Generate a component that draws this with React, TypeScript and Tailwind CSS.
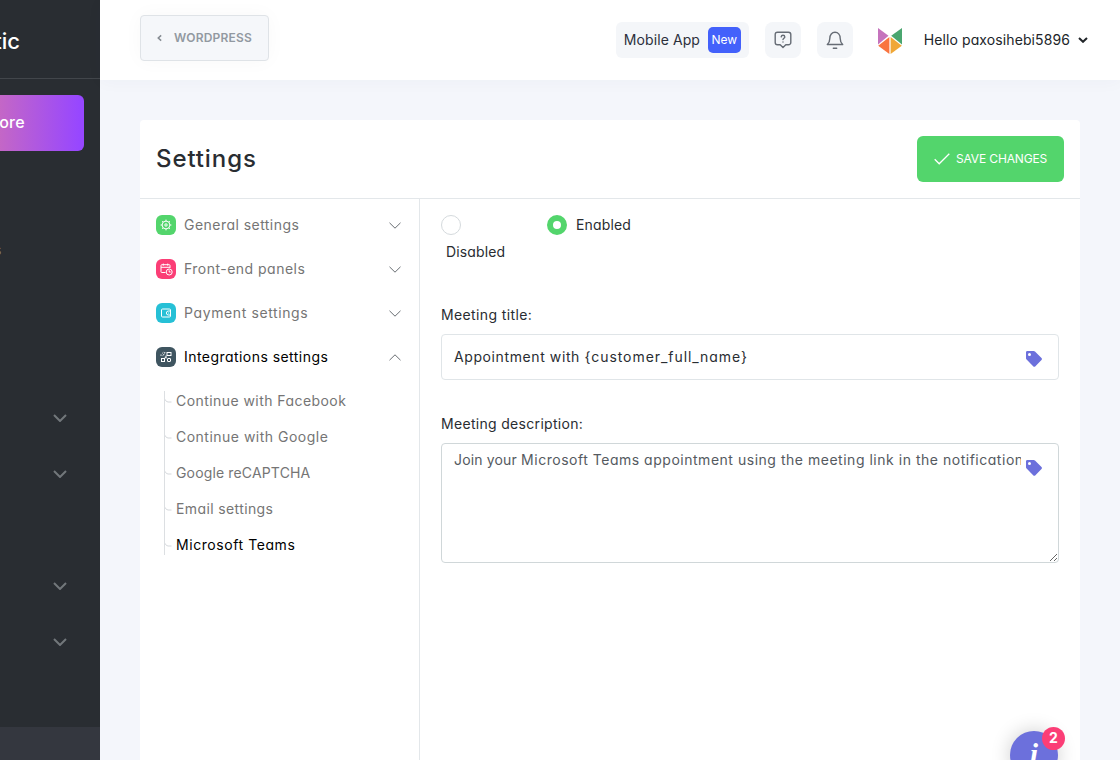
import React, { useState } from 'react';
import clsx from 'clsx';

interface MenuItem {
  label: string;
  color: string;
  tracking: string;
  icon: React.ReactNode;
}

const GearIcon = () => (
  <svg viewBox="0 0 12 12" className="h-3 w-3" fill="none" stroke="white" strokeWidth="1">
    <circle cx="6" cy="6" r="3.9" />
    <circle cx="6" cy="6" r="1.2" />
    <path d="M6 .6v1.5M6 9.9v1.5M.6 6h1.5M9.9 6h1.5M2.2 2.2l1 1M8.8 8.8l1 1M9.8 2.2l-1 1M3.2 8.8l-1 1" />
  </svg>
);

const CalendarIcon = () => (
  <svg viewBox="0 0 13 13" className="h-[13px] w-[13px]" fill="none" stroke="white" strokeWidth="1">
    <path d="M5.5 9.5H1.8A.8.8 0 0 1 1 8.7V2.5a.8.8 0 0 1 .8-.8h7.4a.8.8 0 0 1 .8.8V5M1 4.3h9M3.3.6v2M7.7.6v2" />
    <circle cx="9.2" cy="9" r="3" />
    <path d="M9.2 7.3V9h1.5" />
  </svg>
);

const WalletIcon = () => (
  <svg viewBox="0 0 12 12" className="h-3 w-3" fill="none" stroke="white" strokeWidth="1">
    <rect x="1.5" y="2" width="9" height="8" rx="1" />
    <path d="M10.5 4H8.4a2 2 0 0 0 0 4h2.1M8.2 6h.9" />
  </svg>
);

const IntegrationIcon = () => (
  <svg viewBox="0 0 12 12" className="h-3 w-3" fill="none" stroke="white" strokeWidth="1">
    <path d="M1 4.8V3.5M2.3 2.3l1-.9M4.8 1v1.2M2.6 4.6l2-1.8" />
    <rect x="7" y="1.5" width="4" height="3" />
    <rect x="1.5" y="7.5" width="3" height="3" />
    <rect x="7.5" y="7.5" width="3" height="3" rx=".4" />
    <path d="M4.7 6.3h1.6M6 4.5v3" />
  </svg>
);

const menuItems: MenuItem[] = [
  { label: 'General settings', color: 'bg-[#53d56c]', tracking: 'tracking-[0.46px]', icon: <GearIcon /> },
  { label: 'Front-end panels', color: 'bg-[#fb3e76]', tracking: 'tracking-[0.48px]', icon: <CalendarIcon /> },
  { label: 'Payment settings', color: 'bg-[#26c0d6]', tracking: 'tracking-[0.61px]', icon: <WalletIcon /> },
  { label: 'Integrations settings', color: 'bg-[#3f5560]', tracking: 'tracking-[0.45px]', icon: <IntegrationIcon /> },
];

const integrations = [
  { label: 'Continue with Facebook', tracking: 'tracking-[0.44px]' },
  { label: 'Continue with Google', tracking: 'tracking-[0.49px]' },
  { label: 'Google reCAPTCHA', tracking: 'tracking-[0.15px]' },
  { label: 'Email settings', tracking: 'tracking-[0.38px]' },
  { label: 'Microsoft Teams', tracking: 'tracking-[0.57px]' },
];

// one entry per 56px row of the collapsed main menu
const sidebarRows = [
  { text: '', chevron: false },
  { text: 's', chevron: false },
  { text: '', chevron: false },
  { text: '', chevron: false },
  { text: '', chevron: true },
  { text: '', chevron: true },
  { text: '', chevron: false },
  { text: '', chevron: true },
  { text: '', chevron: true },
];

const TagIcon = () => (
  <svg viewBox="0 0 16 16" className="h-4 w-4" fill="#6c70dc">
    <path
      fillRule="evenodd"
      d="M1.3 0h6.3c.6 0 1 .2 1.4.6l6.5 6.5c.6.6.6 1.3 0 1.9l-6.3 6.4c-.5.6-1.3.6-1.8 0L.6 8.6C.2 8.2 0 7.8 0 7.2V1.3C0 .6.6 0 1.3 0Zm2.2 2a1.5 1.5 0 1 0 0 3 1.5 1.5 0 0 0 0-3Z"
    />
  </svg>
);

const Logo = () => (
  <svg viewBox="0 0 26 28" className="h-7 w-[26px]">
    <path d="M1 1v16.5l10.5-8.7Z" fill="#c573bd" />
    <path d="M25 1v16.5L14.2 8.8Z" fill="#4aa66f" />
    <path d="M12.4 10v17L1.2 18.8Z" fill="#f9743f" />
    <path d="M13.6 10v17L24.8 18.8Z" fill="#f0a736" />
  </svg>
);

const Sidebar: React.FC = () => (
  <aside className="flex w-[100px] shrink-0 flex-col overflow-hidden bg-[#292d32] text-white">
    <div className="flex h-[79px] shrink-0 items-center justify-end border-b border-[#42464b] pr-20 pt-1">
      <span className="text-[22px] font-medium leading-none">tic</span>
    </div>
    <div className="flex w-[84px] justify-end pt-4">
      <button className="flex h-14 w-[228px] shrink-0 items-center justify-end rounded-md bg-[linear-gradient(90deg,#f58a4b_0%,#c467c6_63%,#9747ff_98%)] pb-0.5 pr-[59px] text-base font-medium tracking-[0.3px]">
        ore
      </button>
    </div>
    <nav className="flex flex-1 flex-col pt-[15px]">
      {sidebarRows.map((row, i) => (
        <div key={i} className="flex h-14 items-center">
          {row.text && <span className="-ml-1.5 text-sm text-[#7d8185]">{row.text}</span>}
          {row.chevron && (
            <svg viewBox="0 0 14 8" className="ml-[53px] h-2 w-3.5" fill="none" stroke="#72777b" strokeWidth="2">
              <path d="M1 1l6 6 6-6" />
            </svg>
          )}
        </div>
      ))}
    </nav>
    <div className="h-[33px] shrink-0 bg-[#34373f]" />
  </aside>
);

const Header: React.FC = () => (
  <header className="flex h-20 shrink-0 items-center justify-between bg-white pl-10 pr-8 shadow-[0_2px_16px_rgba(40,50,80,0.03)]">
    <button className="-mt-1 flex h-[46px] w-[129px] items-center rounded-sm border border-[#dfe3e7] bg-[#f5f7fa] pl-4 text-xs font-semibold tracking-[0.2px] text-[#9299a1] shadow-[0_0_20px_rgba(0,0,0,0.03)]">
      <svg viewBox="0 0 6 8" className="mr-3 h-2 w-[5px]" fill="none" stroke="#858b92" strokeWidth="1.8">
        <path d="M5 .8L1.5 4 5 7.2" />
      </svg>
      WORDPRESS
    </button>

    <div className="flex items-center">
      <div className="flex h-9 w-[133px] items-center justify-between rounded-md bg-[#f4f6f9] px-2 text-sm tracking-[0.1px] text-[#2c303c]">
        <span>Mobile App</span>
        <span className="flex h-[26px] w-[33px] items-center justify-center rounded-[5px] bg-[#4361fb] text-xs tracking-normal text-white">
          New
        </span>
      </div>
      <button className="ml-4 flex h-9 w-9 items-center justify-center rounded-lg bg-[#f4f6f9]">
        <svg viewBox="0 0 18 18" className="h-[18px] w-[18px]" fill="none" stroke="#666c75" strokeWidth="1.4" strokeLinejoin="round" strokeLinecap="round">
          <path d="M3.5 1.2h11a2.3 2.3 0 0 1 2.3 2.3v8a2.3 2.3 0 0 1-2.3 2.3h-2.7L9 16.6l-2.8-2.8H3.5a2.3 2.3 0 0 1-2.3-2.3v-8a2.3 2.3 0 0 1 2.3-2.3Z" />
          <path d="M7.2 5.8A1.8 1.8 0 0 1 9 4.3c1 0 1.8.7 1.8 1.7C10.8 7.3 9 7.3 9 8.6M9 11v.1" />
        </svg>
      </button>
      <button className="ml-4 flex h-9 w-9 items-center justify-center rounded-lg bg-[#f4f6f9]">
        <svg viewBox="0 0 18 20" className="h-5 w-[18px]" fill="none" stroke="#666c75" strokeWidth="1.4" strokeLinejoin="round" strokeLinecap="round">
          <path d="M1.3 14.5c1.7-1.5 2.5-2.8 2.5-6C3.8 4.7 6 2.3 9 2.3s5.2 2.4 5.2 6.2c0 3.200.8 4.500 2.500 6ZM7.3 18.3h3.4" />
        </svg>
      </button>
      <div className="ml-6 flex items-center pt-0.5">
        <Logo />
      </div>
      <div className="ml-[21px] flex items-center gap-2 whitespace-nowrap text-sm tracking-[0.1px] text-[#212529]">
        <span>Hello paxosihebi5896</span>
        <svg viewBox="0 0 10 6" className="h-1.5 w-2.5" fill="none" stroke="#212529" strokeWidth="2">
          <path d="M1 1l4 3.8L9 1" />
        </svg>
      </div>
    </div>
  </header>
);

const SettingsMenu: React.FC = () => {
  const [open, setOpen] = useState('Integrations settings');

  return (
    <div className="w-[280px] shrink-0 border-r border-[#e3e7ea] pl-4 pr-[18px] pt-1">
      {menuItems.map((item) => (
        <button
          key={item.label}
          onClick={() => setOpen(item.label)}
          className={clsx(
            'flex h-11 w-full items-center text-sm',
            item.tracking,
            open === item.label ? 'text-black' : 'text-[#757575]'
          )}
        >
          <span className={clsx('mr-2 flex h-5 w-5 items-center justify-center rounded-md', item.color)}>
            {item.icon}
          </span>
          {item.label}
          <svg viewBox="0 0 12 7" className="ml-auto h-[7px] w-3" fill="none" stroke="#686d72" strokeWidth="1">
            <path d={open === item.label ? 'M.5 6.2L6 .8l5.5 5.4' : 'M.5.8L6 6.2 11.5.8'} />
          </svg>
        </button>
      ))}

      {/* Integrations */}
      <div className="ml-2 mt-3 flex h-[164px] border-l border-[#dcdfe2]">
        <div className="-mt-2">
          {integrations.map((item, i) => (
            <div
              key={item.label}
              className={clsx(
                'flex h-9 items-center text-sm',
                item.tracking,
                i === integrations.length - 1 ? 'text-black' : 'text-[#757575]'
              )}
            >
              <svg viewBox="0 0 7 4" className="mr-1 h-1 w-[7px]" fill="none" stroke="#d5d8dc">
                <path d="M0 .3Q1 3 3 3h3.5" />
              </svg>
              {item.label}
            </div>
          ))}
        </div>
      </div>
    </div>
  );
};

const SettingsForm: React.FC = () => {
  const [enabled, setEnabled] = useState(true);

  const radio = (checked: boolean) =>
    clsx('block h-5 w-5 shrink-0 rounded-full', checked ? 'border-[6px] border-[#53d56c]' : 'border border-[#d5dadd]');

  return (
    <div className="flex-1 px-[21px] pt-4 text-sm text-[#292d32]">
      <div className="flex h-[90px]">
        <button className="flex w-[106px] flex-col items-start" onClick={() => setEnabled(false)}>
          <span className={radio(!enabled)} />
          <span className="ml-[5px] mt-[7px] tracking-[0.12px]">Disabled</span>
        </button>
        <button className="flex h-5 items-center" onClick={() => setEnabled(true)}>
          <span className={radio(enabled)} />
          <span className="ml-[9px] tracking-[0.15px]">Enabled</span>
        </button>
      </div>

      <label className="block leading-5 tracking-[0.38px]">Meeting title:</label>
      <div className="mt-[9px] flex h-[46px] items-center justify-between rounded-sm border border-[#e0e5e8] pl-3 pr-4">
        <span className="whitespace-pre tracking-[0.94px]">
          <span className="tracking-[0.6px]">Appointment with </span>
          {'{customer_full_name}'}
        </span>
        <span className="pt-[3px]">
          <TagIcon />
        </span>
      </div>

      <label className="mt-[34px] block leading-5 tracking-[0.31px]">Meeting description:</label>
      <div className="mt-[9px] flex h-[120px] resize-y items-start overflow-hidden rounded-sm border border-[#d0d7d9] pl-3 pr-4 text-[#555a5f]">
        <div className="w-[567px] shrink-0 overflow-hidden whitespace-pre pt-[6px] leading-5 tracking-[0.52px]">
          <span className="tracking-[0.16px]">Join your </span>
          Microsoft Teams appointment using the meeting link in the notification
        </div>
        <span className="ml-auto pt-4">
          <TagIcon />
        </span>
      </div>
    </div>
  );
};

export default function App() {
  return (
    <div className="relative flex h-[760px] w-[1120px] overflow-hidden bg-[#f4f6fb] font-['Inter',sans-serif] [font-feature-settings:'cv11']">
      <Sidebar />
      <div className="flex flex-1 flex-col">
        <Header />
        <main className="flex flex-1 px-10 pt-10">
          <section className="flex flex-1 flex-col rounded-t bg-white">
            <div className="flex h-[79px] shrink-0 items-center justify-between border-b border-[#e3e7ea] px-4">
              <h1 className="text-2xl font-medium tracking-[0.9px] text-[#292d32]">Settings</h1>
              <button className="flex h-[46px] w-[147px] items-center rounded-md bg-[#53d56c] pl-[17px] text-xs tracking-[-0.15px] text-white">
                <svg viewBox="0 0 16 12" className="mr-1.5 h-3 w-4" fill="none" stroke="white" strokeWidth="1.3">
                  <path d="M.7 6.2l4.5 4.6L15.3.8" />
                </svg>
                SAVE CHANGES
              </button>
            </div>
            <div className="flex flex-1">
              <SettingsMenu />
              <SettingsForm />
            </div>
          </section>
        </main>
      </div>

      {/* Help bubble */}
      <div className="absolute left-[1010px] top-[731px] h-12 w-12 rounded-full bg-[#6c70dc] shadow-[0_0_20px_rgba(0,0,0,0.2)]">
        <span className="block pt-[7px] text-center font-['Liberation_Serif',serif] text-[30px] font-bold italic leading-8 text-white">
          i
        </span>
        <span className="absolute -top-1 left-8 flex h-[23px] w-[23px] items-center justify-center rounded-full bg-[#fb3e76] pb-0.5 text-sm font-bold text-white">
          2
        </span>
      </div>
    </div>
  );
}
